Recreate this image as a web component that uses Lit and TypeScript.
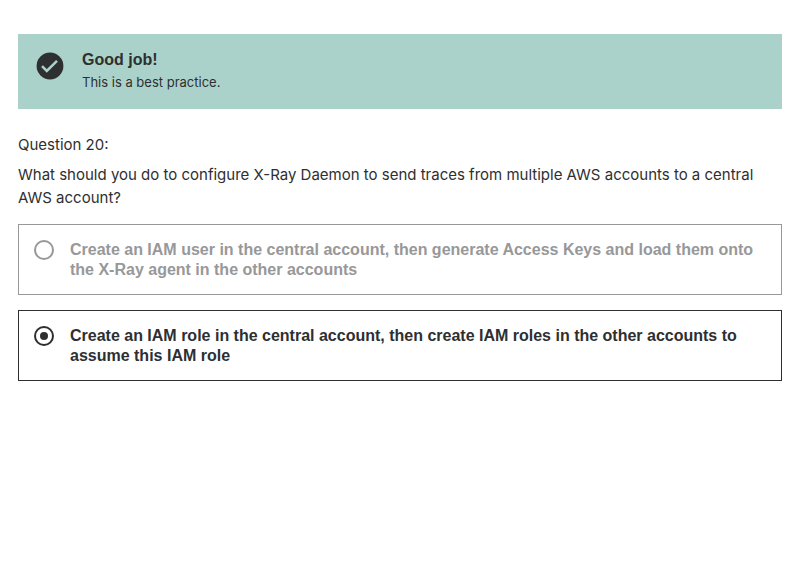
import { LitElement, html, css, svg } from "lit";
import { customElement, property, state } from "lit/decorators.js";
import { classMap } from "lit/directives/class-map.js";

const checkIcon = html`<svg class="icon" viewBox="0 0 28 28" aria-hidden="true">
  ${svg`<circle cx="14" cy="14" r="13.4" fill="#2e2f31"></circle>
  <path d="M6 14.2l4.8 4.8L21 8.8" fill="none" stroke="#abd2ca" stroke-width="2.5"></path>`}
</svg>`;

@customElement("feedback-banner")
export class FeedbackBanner extends LitElement {
  @property() heading = "";
  @property() message = "";

  static styles = css`
    :host {
      display: flex;
      gap: 18px;
      padding: 16px 18px;
      background: #abd2ca;
    }
    .icon {
      flex: none;
      width: 28px;
      height: 28px;
      margin-top: 2px;
    }
    .heading {
      margin: 0;
      font-family: "Liberation Sans", Arial, sans-serif;
      font-size: 16px;
      line-height: 20px;
      font-weight: 700;
    }
    .message {
      margin: 2px 0 0;
      font-size: 13px;
      line-height: 21px;
    }
  `;

  render() {
    return html`${checkIcon}
      <div>
        <h2 class="heading">${this.heading}</h2>
        <p class="message">${this.message}</p>
      </div>`;
  }
}

interface Answer {
  id: string;
  text: string;
}

const answers: Answer[] = [
  {
    id: "user",
    text: "Create an IAM user in the central account, then generate Access Keys and load them onto the X-Ray agent in the other accounts",
  },
  {
    id: "role",
    text: "Create an IAM role in the central account, then create IAM roles in the other accounts to assume this IAM role",
  },
];

@customElement("app-root")
export class AppRoot extends LitElement {
  @state() private selected = "role";

  static styles = css`
    :host {
      display: block;
      padding: 34px 27px 34px 18px;
      color: #2e2f31;
      background: #fff;
      font-family: Inter, "Liberation Sans", sans-serif;
    }
    .number,
    .question {
      margin: 0;
      padding: 0;
      font-size: 15px;
      line-height: 23px;
    }
    .number {
      margin-top: 24px;
    }
    .question {
      margin-top: 7px;
    }
    .answers {
      display: flex;
      flex-direction: column;
      gap: 15px;
      margin: 15px 0 0;
      padding: 0;
      border: 0;
      min-width: 0;
    }
    .answer {
      display: flex;
      align-items: flex-start;
      gap: 16px;
      padding: 15px 15px 14px;
      border: 1px solid currentColor;
      color: #979899;
      font-family: "Liberation Sans", Arial, sans-serif;
      font-size: 16px;
      line-height: 20px;
      font-weight: 700;
    }
    .answer.chosen {
      color: #2e2f31;
    }
    .radio {
      appearance: none;
      flex: none;
      display: grid;
      place-items: center;
      box-sizing: border-box;
      width: 20px;
      height: 20px;
      margin: 0;
      border: 2px solid currentColor;
      border-radius: 50%;
      color: inherit;
    }
    .radio:checked::before {
      content: "";
      width: 8px;
      height: 8px;
      border-radius: 50%;
      background: currentColor;
    }
  `;

  render() {
    return html`
      <feedback-banner heading="Good job!" message="This is a best practice."></feedback-banner>
      <p class="number">Question 20:</p>
      <p class="question" id="question">
        What should you do to configure X-Ray Daemon to send traces from multiple AWS accounts to a
        central AWS account?
      </p>
      <fieldset class="answers" aria-labelledby="question">
        ${answers.map(
          (a) => html`<label
            class=${classMap({ answer: true, chosen: this.selected === a.id })}
          >
            <input
              class="radio"
              type="radio"
              name="answer"
              .value=${a.id}
              .checked=${this.selected === a.id}
              @change=${() => (this.selected = a.id)}
            />
            <span>${a.text}</span>
          </label>`
        )}
      </fieldset>
    `;
  }
}
